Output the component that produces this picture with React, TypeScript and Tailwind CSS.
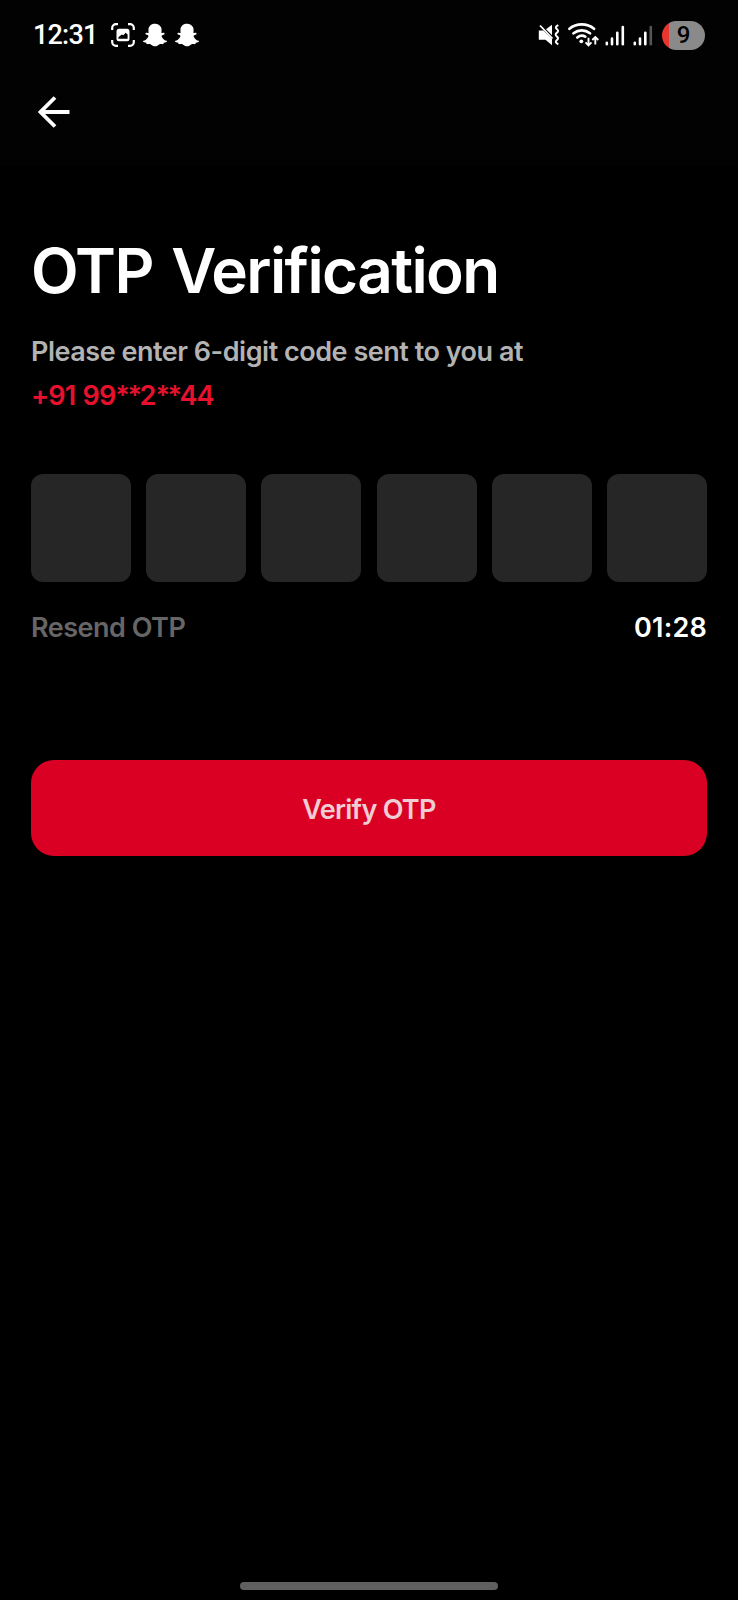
import { FaSnapchatGhost } from "react-icons/fa";

function CaptureIcon() {
  return (
    <svg width="24" height="24" viewBox="0 0 24 24" fill="none">
      <path
        d="M1.200 7V5a3.800 3.800 0 0 1 3.800-3.800h2M17 1.200h2a3.800 3.800 0 0 1 3.800 3.800v2M22.800 17v2a3.800 3.800 0 0 1-3.800 3.800h-2M7 22.800H5a3.800 3.800 0 0 1-3.800-3.800v-2"
        stroke="#fff"
        strokeWidth="2.200"
      />
      <path
        fillRule="evenodd"
        d="M8 5.800h8a2.500 2.500 0 0 1 2.500 2.500v7.400a2.500 2.500 0 0 1-2.500 2.500H8a2.500 2.500 0 0 1-2.500-2.500V8.300A2.500 2.500 0 0 1 8 5.800zM7.400 15.800h9.200v-4.400l-2-1.600-2.200 2.500-1.600-.9-3.400 2.800z"
        fill="#fff"
      />
    </svg>
  );
}

function MuteVibrateIcon() {
  return (
    <svg width="22" height="22" viewBox="0 0 22 22" fill="none">
      <path d="M.8 6.500h4.500L14 14.800v6.400l-6.500-5.500H.8z" fill="#fff" />
      <path d="M8 5.200L14 .8v10.400z" fill="#fff" />
      <path d="M2 1.500l12.500 13" stroke="#fff" strokeWidth="1.800" />
      <path
        d="M20.300 1.200c-3 1.600-3 2.600-1.300 4s1.300 2.400-.3 3.700-1.300 2.400.3 3.700 1.300 2.400-.3 3.700-1.200 2.500 1.600 4"
        stroke="#fff"
        strokeWidth="2"
      />
    </svg>
  );
}

function WifiIcon() {
  return (
    <svg width="31" height="24" viewBox="0 0 31 24" fill="none">
      <g stroke="#fff" strokeWidth="2.700" strokeLinecap="round">
        <path d="M1.500 5.800c7-5.800 17.500-5.800 24.500 0" />
        <path d="M5.500 10.300c5-4 11.500-4 16.500 0" />
        <path d="M9.300 14.500c2.600-2.100 5.300-2.300 8-.9" />
      </g>
      <circle cx="13.300" cy="18.300" r="1.900" fill="#fff" />
      <g stroke="#fff" strokeWidth="1.900">
        <path d="M20.500 14.800v7.400M17.500 19.300l3 3 3-3" />
        <path d="M27.300 21.500v-7.400M24.300 17l3-3 3 3" />
      </g>
    </svg>
  );
}

function SignalIcon({ weak = false }: { weak?: boolean }) {
  return (
    <svg width="20" height="21" viewBox="0 0 20 21" strokeWidth="2.600" strokeLinecap="round">
      <path d="M1.800 17.800v1.400M7 13.500v5.700M12.300 7.800v11.400" stroke="#fff" />
      <path d="M17.800 2v17.200" stroke={weak ? "#555" : "#fff"} />
    </svg>
  );
}

function BackArrow() {
  return (
    <svg width="32" height="32" viewBox="0 0 32 32" fill="none" stroke="#fff" strokeWidth="3.800">
      <path d="M31.500 16H3M17 1.500L2.500 16 17 30.500" />
    </svg>
  );
}

export default function App() {
  return (
    <div className="flex h-[1600px] w-[738px] flex-col bg-black font-['Inter',sans-serif] font-semibold text-white">
      <header className="h-[166px] bg-[#020202]">
        <div className="flex h-[70px] items-center justify-between pr-[33px] pl-[33px]">
          <div className="flex items-center">
            <span className="w-[78px] font-['Roboto',sans-serif] text-[27px] leading-8 font-medium tracking-[-0.8px]">
              12:31
            </span>
            <CaptureIcon />
            <FaSnapchatGhost className="ml-[8px] size-6" />
            <FaSnapchatGhost className="ml-[8px] size-6" />
          </div>
          <div className="flex items-center">
            <MuteVibrateIcon />
            <span className="ml-[8px]">
              <WifiIcon />
            </span>
            <span className="ml-[6px]">
              <SignalIcon />
            </span>
            <span className="ml-[8px]">
              <SignalIcon weak />
            </span>
            <div className="ml-[9px] flex h-[29px] w-[43px] items-center justify-center overflow-hidden rounded-full bg-[linear-gradient(90deg,#e8352e_6.500px,#8a8a8a_6.500px)] font-['Roboto',sans-serif] text-[24px] leading-none font-medium text-black">
              9
            </div>
          </div>
        </div>
        <button className="flex h-[84px] items-center pl-[38px]" aria-label="Back">
          <BackArrow />
        </button>
      </header>

      <main className="flex grow flex-col px-[31px] pt-[73px]">
        <h1 className="text-[62px] leading-[64px] tracking-[-1.600px] whitespace-nowrap [word-spacing:4.500px]">
          OTP Verification
        </h1>
        <p className="mt-[27px] text-[27px] leading-[44px] tracking-[-0.480px] whitespace-nowrap text-[#b3b3b3]">
          Please enter 6-digit code sent to you at
        </p>
        <p className="text-[27px] leading-[44px] tracking-[-0.900px] whitespace-nowrap text-[#e8112d] [word-spacing:1.500px]">
          +91 99<span className="tracking-[-2.500px]">**</span>2<span className="tracking-[-2.500px]">**</span>44
        </p>

        <div className="mt-[56px] grid grid-cols-6 gap-[15.300px]">
          {[0, 1, 2, 3, 4, 5].map((i) => (
            <div key={i} className="h-[108px] rounded-[12px] bg-[#262626]" />
          ))}
        </div>

        <div className="mt-6 flex justify-between text-[27px] leading-[44px]">
          <span className="tracking-[-0.500px] text-[#666]">Resend OTP</span>
          <span className="tracking-[0.200px]">01:28</span>
        </div>

        <button className="mt-[110px] h-[96px] rounded-[23px] bg-[#d90024] pt-1 text-[27px] tracking-[-0.700px] text-[#f0ccd3]">
          Verify OTP
        </button>
      </main>

      <div className="mb-[10px] h-2 w-[258px] self-center rounded-full bg-[#606060]" />
    </div>
  );
}
